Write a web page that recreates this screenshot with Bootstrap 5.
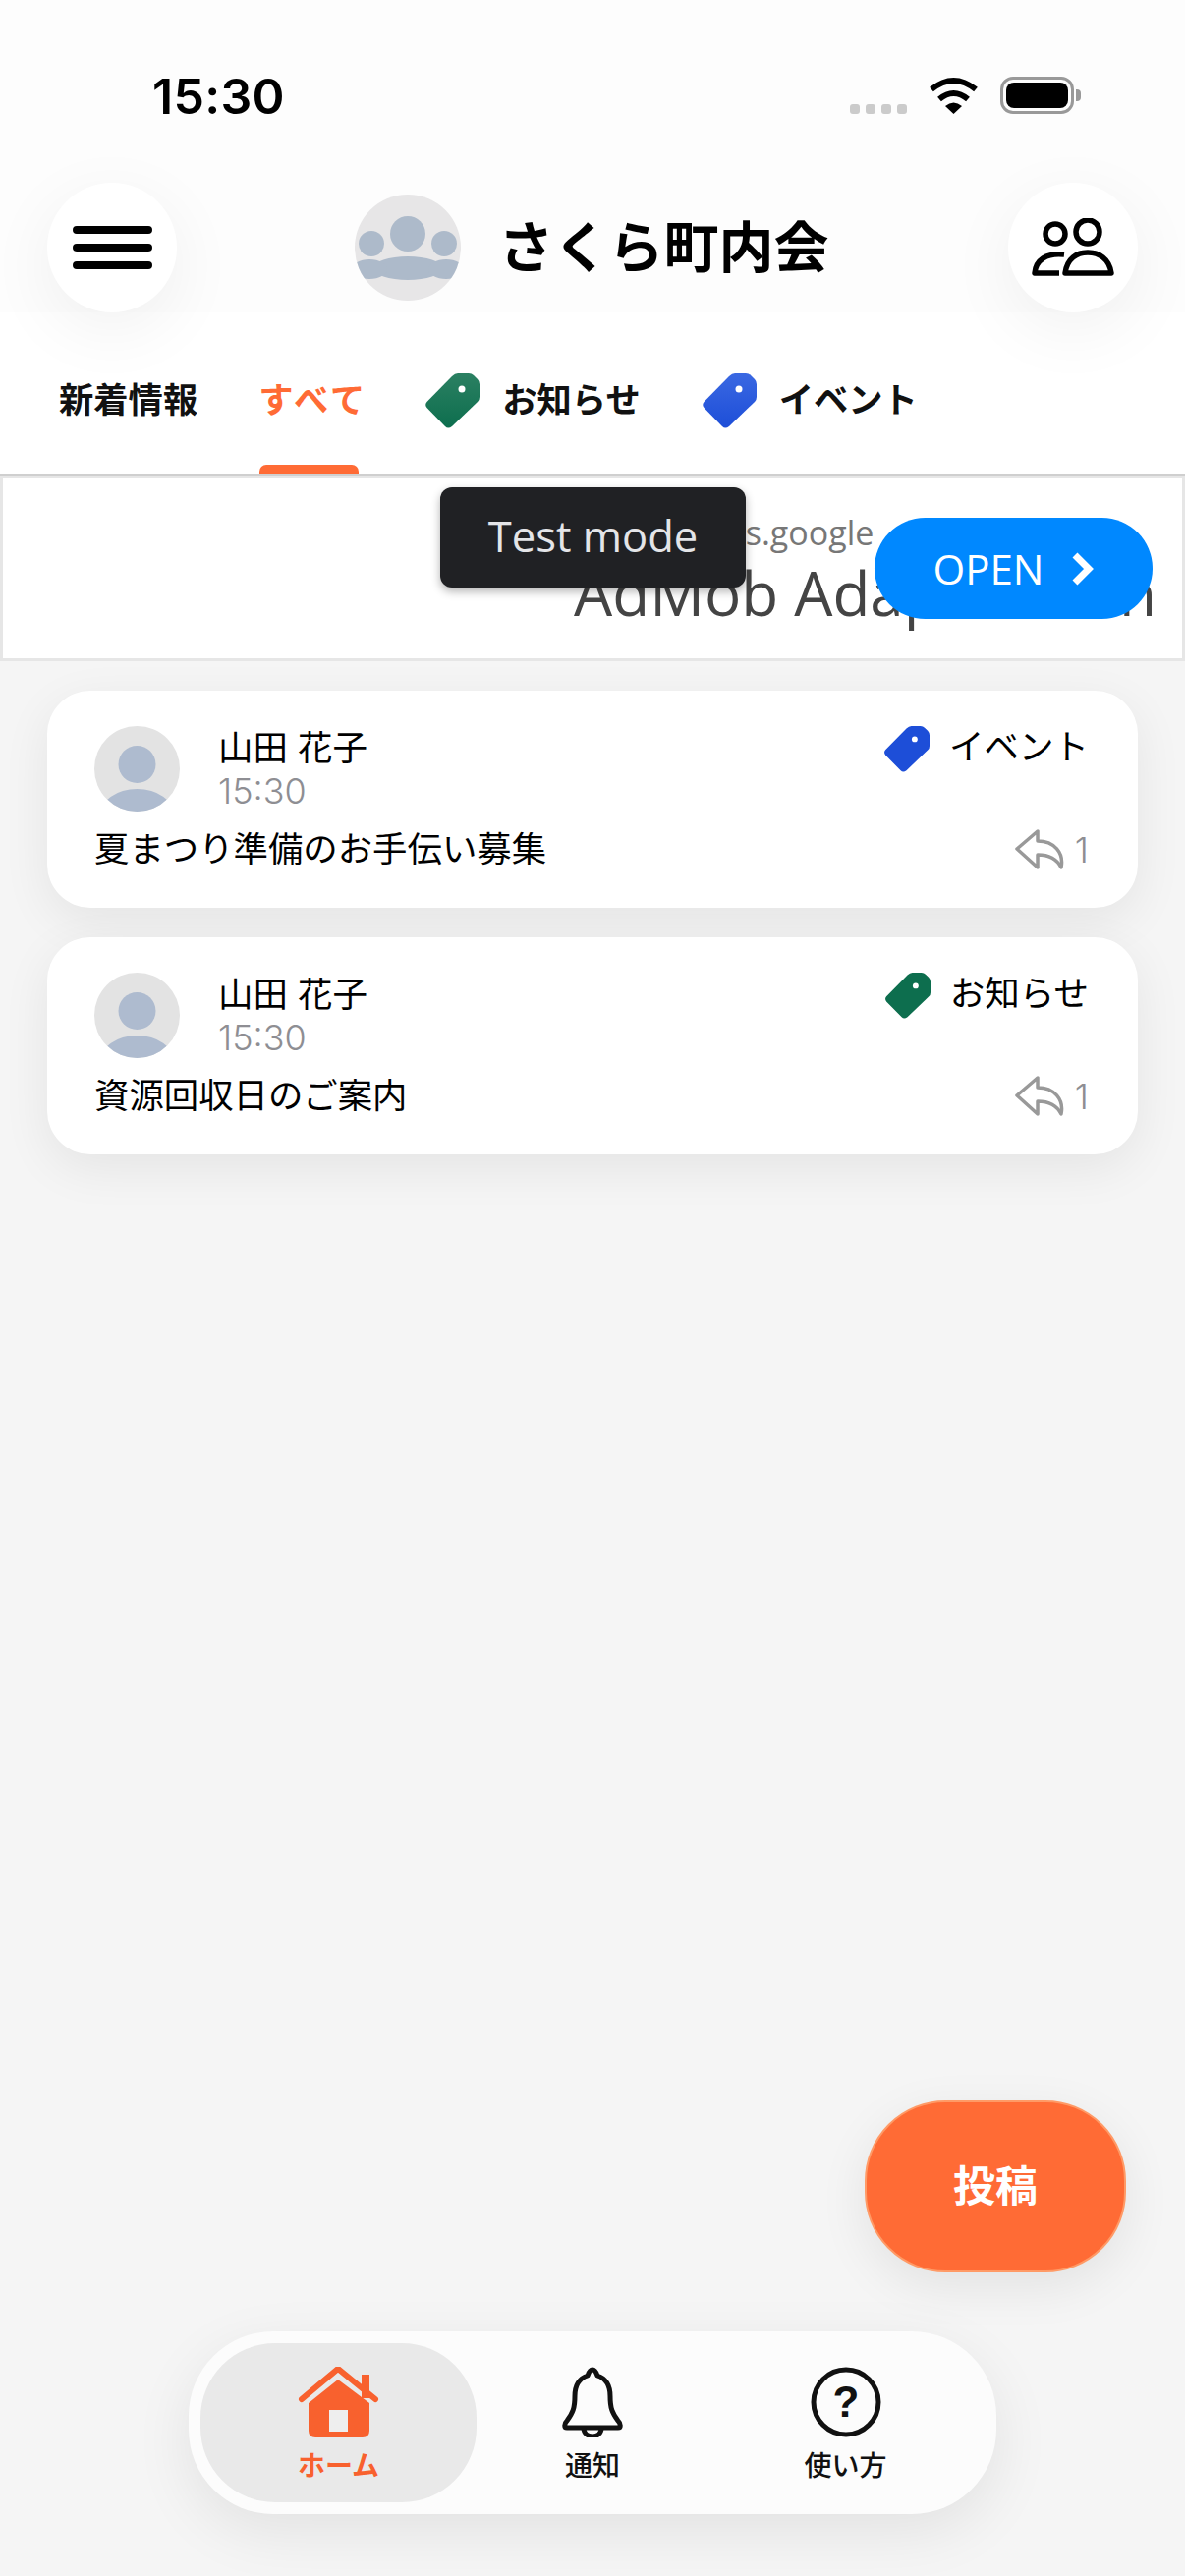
<!DOCTYPE html>
<html lang="ja">
<head>
  <meta charset="UTF-8" />
  <title>さくら町内会</title>
  <meta name="viewport" content="width=device-width, initial-scale=1" />
  <link href="https://cdn.jsdelivr.net/npm/bootstrap@5.3.0/dist/css/bootstrap.min.css" rel="stylesheet" />
  <style>
    body {
      margin: 0;
      background: #f5f5f5;
      font-family: Inter, "Noto Sans CJK JP", sans-serif;
      color: #000;
    }

    .app-screen {
      position: relative;
      width: 1206px;
      height: 2622px;
      overflow: hidden;
      background: #f5f5f5;
    }

    .top-area { background: #fdfdfd; }

    .status-row {
      height: 186px;
      padding: 65px 106px 0 155px;
    }
    .clock { font-size: 50px; font-weight: 600; line-height: 66px; letter-spacing: 0.3px; }
    .status-icons { height: 66px; padding-top: 13px; }
    .signal-dots { gap: 6px; margin: 28px 22px 0 0; }
    .signal-dots i { width: 10px; height: 10px; border-radius: 3px; background: #cbcbcb; }
    .battery-box {
      width: 75px;
      height: 38px;
      margin-left: 22px;
      padding: 3px;
      border: 3px solid #999;
      border-radius: 13px;
    }
    .battery-box i { display: block; height: 100%; background: #000; border-radius: 8px; }
    .battery-cap { width: 5px; height: 12px; margin: 13px 0 0 2px; background: #999; border-radius: 0 4px 4px 0; }

    .head-row { height: 132px; padding: 0 48px; }
    .round-btn {
      width: 132px;
      height: 132px;
      padding: 0;
      border: 0;
      background: #fff;
      box-shadow: 0 18px 70px rgba(0, 0, 0, 0.06);
    }
    .town-name { font-size: 56px; font-weight: 700; line-height: 1; margin: 0 2px 0 39px; }

    .tab-row {
      height: 166px;
      padding: 62px 0 0 60px;
      gap: 62px;
      background: #fff;
      border-bottom: 2px solid #cfcfcf;
    }
    .tab-item {
      position: relative;
      height: 56px;
      font-size: 35.3px;
      font-weight: 700;
      line-height: 56px;
      color: #111;
    }
    .tab-item svg { margin-right: 23px; }
    .tab-active { color: #ff6b35; letter-spacing: 3px; margin-right: -4px; }
    .tab-active::after {
      content: "";
      position: absolute;
      left: 1px;
      width: 101px;
      bottom: -46px;
      height: 9px;
      background: #ff6b35;
      border-radius: 7px 7px 0 0;
    }

    .ad-frame {
      position: relative;
      height: 189px;
      overflow: hidden;
      background: #fff;
      border: 3px solid #e6e6e6;
      font-family: "Open Sans", sans-serif;
    }
    .ad-url { padding: 33px 0 0 716px; font-size: 34px; line-height: 45px; color: #777; white-space: nowrap; }
    .ad-title { padding: 0 0 0 581px; font-size: 62px; line-height: 76px; color: #444; white-space: nowrap; }
    .ad-title-tail { letter-spacing: -1.6px; }
    .ad-badge {
      position: absolute;
      left: 445px;
      top: 9px;
      width: 311px;
      height: 102px;
      background: #202124;
      border-radius: 12px;
      box-shadow: 0 4px 10px rgba(0, 0, 0, 0.3);
      color: #e4e5e8;
      font-size: 43.5px;
      line-height: 100px;
      text-align: center;
    }
    .ad-open {
      position: absolute;
      left: 887px;
      top: 40px;
      width: 283px;
      height: 103px;
      padding: 0;
      border: 0;
      border-radius: 52px;
      background: #0088ff;
      color: #fff;
      font-size: 42px;
      gap: 27px;
    }

    .post-list { padding: 30px 48px 0; gap: 30px; }
    .post-card {
      height: 221px;
      padding: 36px 48px 0;
      border: 0;
      border-radius: 44px;
      box-shadow: 0 14px 50px rgba(0, 0, 0, 0.07);
    }
    .poster-info { margin-left: 39px; }
    .poster-name { font-size: 35.5px; line-height: 42px; margin-top: 2px; }
    .post-time { font-size: 36px; line-height: 42px; margin-top: 1px; color: #8e8e93; font-weight: 300; }
    .post-kind { font-size: 35.5px; line-height: 40px; margin-right: 2px; }
    .post-kind svg { margin-left: 1px; }
    .post-kind span { margin: 2px 0 0 20px; }
    .post-body { font-size: 35.4px; line-height: 44px; margin-top: 17px; }
    .reply-count { font-size: 36px; line-height: 40px; color: #8e8e93; font-weight: 300; gap: 11px; margin-top: 17px; margin-right: 2px; }

    .post-btn {
      position: absolute;
      left: 880px;
      top: 2138px;
      width: 266px;
      height: 175px;
      padding: 0;
      background: #ff6b35;
      border: 2px solid #ff9a66;
      border-radius: 82px;
      box-shadow: 0 14px 50px rgba(0, 0, 0, 0.08);
      color: #fff;
      font-size: 43px;
      font-weight: 700;
    }
    .post-btn:hover { background: #ff6b35; color: #fff; }

    .bottom-nav {
      position: absolute;
      left: 192px;
      top: 2373px;
      width: 822px;
      height: 186px;
      padding: 12px;
      background: #fcfcfc;
      border-radius: 86px;
      box-shadow: 0 18px 60px rgba(0, 0, 0, 0.08);
    }
    .nav-slot {
      padding-top: 24px;
      font-size: 28px;
      font-weight: 500;
      line-height: 36px;
      color: #111;
      text-align: center;
    }
    .nav-slot svg { display: block; margin: 0 auto 11px; }
    .nav-home { width: 281px; background: #e9e9e9; border-radius: 76px; color: #f8612e; font-weight: 700; }
    .nav-alert { width: 236px; }
    .nav-help { width: 279px; }
  </style>
</head>
<body>

  <svg width="0" height="0" class="d-block position-absolute">
    <defs>
      <linearGradient id="tagGreen" x1="0" y1="0" x2="0" y2="1">
        <stop offset="0" stop-color="#2b8062" />
        <stop offset="1" stop-color="#0d6e4e" />
      </linearGradient>
      <linearGradient id="tagBlue" x1="0" y1="0" x2="0" y2="1">
        <stop offset="0" stop-color="#3a68e2" />
        <stop offset="1" stop-color="#1d4ed8" />
      </linearGradient>
      <path id="tagShape" d="M2.5 29 L28 3 Q31 0 34 0 H45 Q48 0 50 2 L54 6 Q56 8 56 11 V24 Q56 27 54 29 L28 54 Q24 57 21 54 L2.5 35 Q0 32 2.5 29 Z" />
      <clipPath id="faceClip"><circle cx="43.5" cy="43.5" r="43.5" /></clipPath>
      <clipPath id="groupClip"><circle cx="54" cy="54" r="54" /></clipPath>
      <symbol id="personPic" viewBox="0 0 87 87">
        <circle cx="43.5" cy="43.5" r="43.5" fill="#e3e3e3" />
        <g clip-path="url(#faceClip)" fill="#aebbcf">
          <circle cx="43.5" cy="39" r="19" />
          <ellipse cx="43.5" cy="91" rx="38" ry="27" />
        </g>
      </symbol>
      <symbol id="replyArrow" viewBox="0 0 50 42">
        <path d="M2 20 L23 2 V12 C40 12 50 24 47 39 C43 31 35 26 23 26 V39 Z" fill="none" stroke="#999" stroke-width="3.5" stroke-linejoin="round" />
      </symbol>
    </defs>
  </svg>

  <div class="app-screen">
    <div class="top-area">
      <div class="status-row d-flex justify-content-between">
        <div class="clock">15:30</div>
        <div class="status-icons d-flex align-items-start">
          <div class="signal-dots d-flex"><i></i><i></i><i></i><i></i></div>
          <svg width="51" height="38" viewBox="0 0 51 38">
            <path d="M3 13 Q25.5 -5 48 13" fill="none" stroke="#000" stroke-width="6" />
            <path d="M11 23 Q25.5 11 40 23" fill="none" stroke="#000" stroke-width="6" />
            <path d="M17 30 Q25.5 23 34 30 L25.5 38 Z" fill="#000" />
          </svg>
          <div class="battery-box"><i></i></div>
          <div class="battery-cap"></div>
        </div>
      </div>

      <div class="head-row d-flex align-items-center justify-content-between">
        <button class="btn round-btn rounded-circle d-flex align-items-center justify-content-center" type="button" aria-label="メニュー">
          <svg width="81" height="44" viewBox="0 0 81 44">
            <path d="M4 4 H77 M4 22 H77 M4 40 H77" stroke="#000" stroke-width="8" stroke-linecap="round" />
          </svg>
        </button>
        <div class="d-flex align-items-center">
          <svg width="108" height="108" viewBox="0 0 108 108">
            <circle cx="54" cy="54" r="54" fill="#e7e6e7" />
            <g clip-path="url(#groupClip)" fill="#adbaca">
              <circle cx="54" cy="40" r="18" />
              <circle cx="17" cy="50" r="13" />
              <circle cx="91" cy="50" r="13" />
              <ellipse cx="54" cy="75" rx="35" ry="12" />
              <ellipse cx="15" cy="76" rx="18" ry="10" />
              <ellipse cx="93" cy="76" rx="18" ry="10" />
            </g>
          </svg>
          <div class="town-name">さくら町内会</div>
        </div>
        <button class="btn round-btn rounded-circle d-flex align-items-center justify-content-center" type="button" aria-label="メンバー">
          <svg width="84" height="60" viewBox="0 0 84 60" fill="none" stroke="#000" stroke-width="5.5">
            <circle cx="24" cy="16" r="10" />
            <circle cx="57" cy="14" r="12" />
            <path d="M34 56 C36 41 46 35 57 35 C68 35 79 41 81 56 Z" stroke-linejoin="round" />
            <path d="M33 37 C15 35 4 43 3 56 H28" stroke-linejoin="round" />
          </svg>
        </button>
      </div>

      <nav class="tab-row d-flex">
        <div class="tab-item">新着情報</div>
        <div class="tab-item tab-active">すべて</div>
        <div class="tab-item d-flex">
          <svg width="56" height="56" viewBox="0 0 56 56"><use href="#tagShape" fill="url(#tagGreen)" /><circle cx="38" cy="16" r="3.5" fill="#fff" /></svg>
          お知らせ
        </div>
        <div class="tab-item d-flex">
          <svg width="56" height="56" viewBox="0 0 56 56"><use href="#tagShape" fill="url(#tagBlue)" /><circle cx="38" cy="16" r="3.5" fill="#fff" /></svg>
          イベント
        </div>
      </nav>
    </div>

    <div class="ad-frame">
      <div class="ad-url">ads.google</div>
      <div class="ad-title">AdMob Ada<span class="ad-title-tail">ptive Ban</span></div>
      <div class="ad-badge">Test mode</div>
      <button class="ad-open d-flex align-items-center justify-content-center" type="button">
        OPEN
        <svg width="24" height="34" viewBox="0 0 24 34"><path d="M5 3 L19 17 L5 31" fill="none" stroke="#fff" stroke-width="7" /></svg>
      </button>
    </div>

    <div class="post-list d-flex flex-column">
      <div class="card post-card">
        <div class="d-flex">
          <svg width="87" height="87"><use href="#personPic" /></svg>
          <div class="poster-info flex-grow-1">
            <div class="poster-name">山田 花子</div>
            <div class="post-time">15:30</div>
          </div>
          <div class="post-kind d-flex align-items-start">
            <svg width="47" height="47" viewBox="0 0 56 56"><use href="#tagShape" fill="#1d4ed8" /><circle cx="38" cy="16" r="3.5" fill="#fff" /></svg>
            <span>イベント</span>
          </div>
        </div>
        <div class="d-flex justify-content-between">
          <div class="post-body">夏まつり準備のお手伝い募集</div>
          <div class="reply-count d-flex align-items-center">
            <svg width="50" height="42"><use href="#replyArrow" /></svg>
            <span>1</span>
          </div>
        </div>
      </div>

      <div class="card post-card">
        <div class="d-flex">
          <svg width="87" height="87"><use href="#personPic" /></svg>
          <div class="poster-info flex-grow-1">
            <div class="poster-name">山田 花子</div>
            <div class="post-time">15:30</div>
          </div>
          <div class="post-kind d-flex align-items-start">
            <svg width="47" height="47" viewBox="0 0 56 56"><use href="#tagShape" fill="#0d6e4e" /><circle cx="38" cy="16" r="3.5" fill="#fff" /></svg>
            <span>お知らせ</span>
          </div>
        </div>
        <div class="d-flex justify-content-between">
          <div class="post-body">資源回収日のご案内</div>
          <div class="reply-count d-flex align-items-center">
            <svg width="50" height="42"><use href="#replyArrow" /></svg>
            <span>1</span>
          </div>
        </div>
      </div>
    </div>

    <button class="btn post-btn d-flex align-items-center justify-content-center" type="button">投稿</button>

    <div class="bottom-nav d-flex">
      <div class="nav-slot nav-home">
        <svg width="83" height="72" viewBox="0 0 83 72">
          <rect x="65" y="8" width="8" height="24" fill="#f8612e" />
          <path d="M4 33 L41 2 L79 33" fill="none" stroke="#f8612e" stroke-width="6" stroke-linecap="round" stroke-linejoin="round" />
          <path d="M11 37 L41 13 L73 37 V65 Q73 72 66 72 H18 Q11 72 11 65 Z" fill="#f8612e" />
          <rect x="32" y="44" width="19" height="22" fill="#eeeeee" />
        </svg>
        ホーム
      </div>
      <div class="nav-slot nav-alert">
        <svg width="65" height="72" viewBox="0 0 65 72" fill="none" stroke="#111" stroke-width="5" stroke-linejoin="round">
          <path d="M32 3 C29 3 28 6 27 9 C18 12 14 20 14 30 C14 42 12 47 6 55 C3 58 3 62 6 62 H58 C61 62 61 58 58 55 C52 47 50 42 50 30 C50 20 46 12 37 9 C36 6 35 3 32 3 Z" />
          <path d="M23 62 C23 74 41 74 41 62" />
        </svg>
        通知
      </div>
      <div class="nav-slot nav-help">
        <svg width="72" height="72" viewBox="0 0 72 72">
          <circle cx="36" cy="36" r="33" fill="none" stroke="#111" stroke-width="5" />
          <text x="36" y="51" text-anchor="middle" font-family="Liberation Sans, sans-serif" font-size="44" font-weight="700" fill="#111">?</text>
        </svg>
        使い方
      </div>
    </div>
  </div>

  <script src="https://cdn.jsdelivr.net/npm/bootstrap@5.3.0/dist/js/bootstrap.bundle.min.js"></script>
</body>
</html>
